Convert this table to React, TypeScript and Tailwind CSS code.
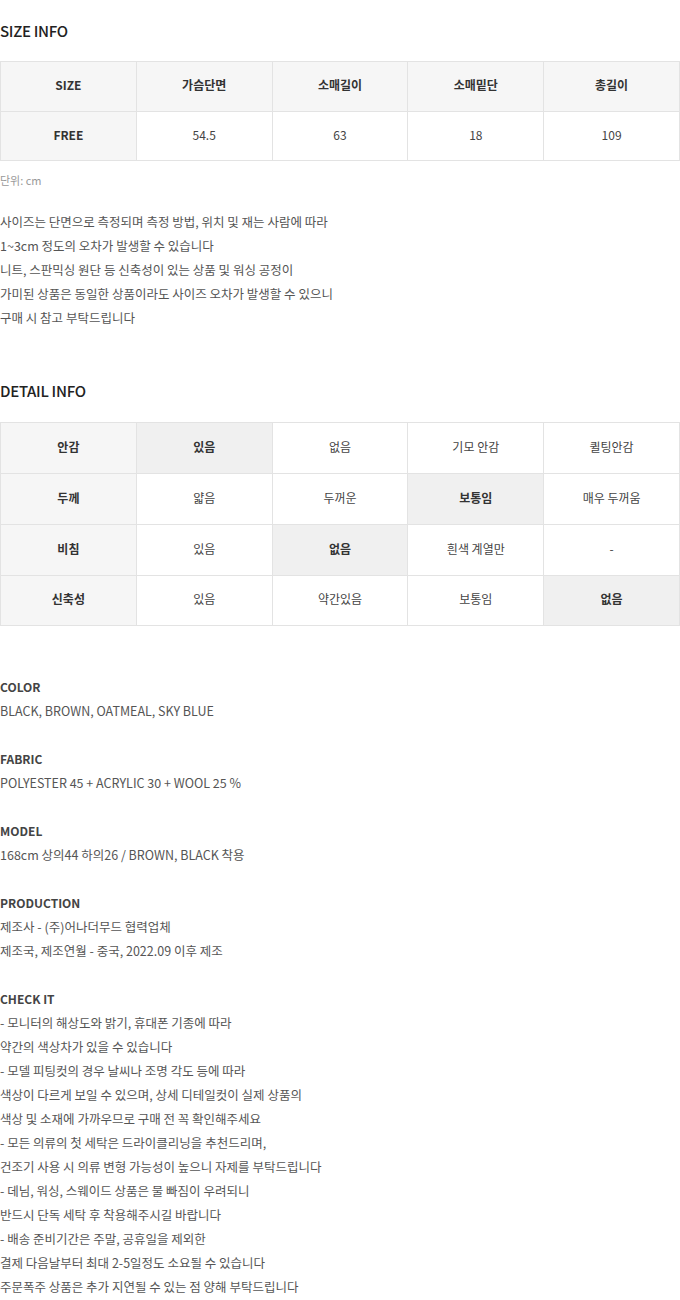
import React from "react";

const font = { fontFamily: '"Noto Sans CJK KR", "Noto Sans", sans-serif' };

type Cell = { t: string; hl?: boolean };

const sizeHead = ["SIZE", "가슴단면", "소매길이", "소매밑단", "총길이"];
const sizeRow = ["FREE", "54.5", "63", "18", "109"];

const detail: { label: string; cells: Cell[] }[] = [
  { label: "안감", cells: [{ t: "있음", hl: true }, { t: "없음" }, { t: "기모 안감" }, { t: "퀼팅안감" }] },
  { label: "두께", cells: [{ t: "얇음" }, { t: "두꺼운" }, { t: "보통임", hl: true }, { t: "매우 두꺼움" }] },
  { label: "비침", cells: [{ t: "있음" }, { t: "없음", hl: true }, { t: "흰색 계열만" }, { t: "-" }] },
  { label: "신축성", cells: [{ t: "있음" }, { t: "약간있음" }, { t: "보통임" }, { t: "없음", hl: true }] },
];

const info: { title: string; lines: string[] }[] = [
  { title: "COLOR", lines: ["BLACK, BROWN, OATMEAL, SKY BLUE"] },
  { title: "FABRIC", lines: ["POLYESTER 45 + ACRYLIC 30 + WOOL 25 %"] },
  { title: "MODEL", lines: ["168cm 상의44 하의26 / BROWN, BLACK 착용"] },
  { title: "PRODUCTION", lines: ["제조사 - (주)어나더무드 협력업체", "제조국, 제조연월 - 중국, 2022.09 이후 제조"] },
  {
    title: "CHECK IT",
    lines: [
      "- 모니터의 해상도와 밝기, 휴대폰 기종에 따라",
      "약간의 색상차가 있을 수 있습니다",
      "- 모델 피팅컷의 경우 날씨나 조명 각도 등에 따라",
      "색상이 다르게 보일 수 있으며, 상세 디테일컷이 실제 상품의",
      "색상 및 소재에 가까우므로 구매 전 꼭 확인해주세요",
      "- 모든 의류의 첫 세탁은 드라이클리닝을 추천드리며,",
      "건조기 사용 시 의류 변형 가능성이 높으니 자제를 부탁드립니다",
      "- 데님, 워싱, 스웨이드 상품은 물 빠짐이 우려되니",
      "반드시 단독 세탁 후 착용해주시길 바랍니다",
      "- 배송 준비기간은 주말, 공휴일을 제외한",
      "결제 다음날부터 최대 2-5일정도 소요될 수 있습니다",
      "주문폭주 상품은 추가 지연될 수 있는 점 양해 부탁드립니다",
    ],
  },
];

export default function App() {
  return (
    <div className="w-[680px] bg-white text-[#333] pt-[20px] pb-[20px]" style={font}>
      <h2 className="h-[22px] leading-[22px] text-[15px] font-medium tracking-[-0.3px] text-[#222]">SIZE INFO</h2>
      <table className="mt-[19px] w-full border-collapse table-fixed text-[12px]">
        <tbody>
          <tr className="h-[50px]">
            {sizeHead.map((h) => (
              <td key={h} className="border border-[#e3e3e3] bg-[#f6f6f6] text-center font-bold text-[#333] pb-[4px]">
                {h}
              </td>
            ))}
          </tr>
          <tr className="h-[49px]">
            {sizeRow.map((v, i) => (
              <td
                key={i}
                className={
                  "border border-[#e3e3e3] text-center pb-[3px] " +
                  (i === 0 ? "bg-[#f6f6f6] font-bold text-[#333]" : "bg-white text-[#444]")
                }
              >
                {v}
              </td>
            ))}
          </tr>
        </tbody>
      </table>
      <div className="mt-[10px] h-[18px] leading-[18px] text-[11px] text-[#999]">단위: cm</div>
      <div className="mt-[21px] text-[12.5px] leading-[24px] text-[#555]">
        <p>사이즈는 단면으로 측정되며 측정 방법, 위치 및 재는 사람에 따라</p>
        <p>1~3cm 정도의 오차가 발생할 수 있습니다</p>
        <p>니트, 스판믹싱 원단 등 신축성이 있는 상품 및 워싱 공정이</p>
        <p>가미된 상품은 동일한 상품이라도 사이즈 오차가 발생할 수 있으니</p>
        <p>구매 시 참고 부탁드립니다</p>
      </div>

      <h2 className="mt-[50px] h-[22px] leading-[22px] text-[15px] font-medium tracking-[-0.3px] text-[#222]">DETAIL INFO</h2>
      <table className="mt-[20px] w-full border-collapse table-fixed text-[12px]">
        <tbody>
          {detail.map((r, ri) => (
            <tr key={r.label} className={ri === 3 ? "h-[50px]" : "h-[51px]"}>
              <td className="border border-[#e3e3e3] bg-[#f6f6f6] text-center font-bold text-[#333] pb-[3px]">{r.label}</td>
              {r.cells.map((c, i) => (
                <td
                  key={i}
                  className={
                    "border border-[#e3e3e3] text-center pb-[3px] " +
                    (c.hl ? "bg-[#f0f0f0] font-bold text-[#333]" : "bg-white text-[#444]")
                  }
                >
                  {c.t}
                </td>
              ))}
            </tr>
          ))}
        </tbody>
      </table>

      <div className="mt-[49px] text-[12.5px] leading-[24px] text-[#555]">
        {info.map((g, gi) => (
          <div key={g.title} className={gi > 0 ? "mt-[24px]" : ""}>
            <p className="font-bold text-[#444] text-[12px]">{g.title}</p>
            {g.lines.map((l) => (
              <p key={l}>{l}</p>
            ))}
          </div>
        ))}
      </div>
    </div>
  );
}
